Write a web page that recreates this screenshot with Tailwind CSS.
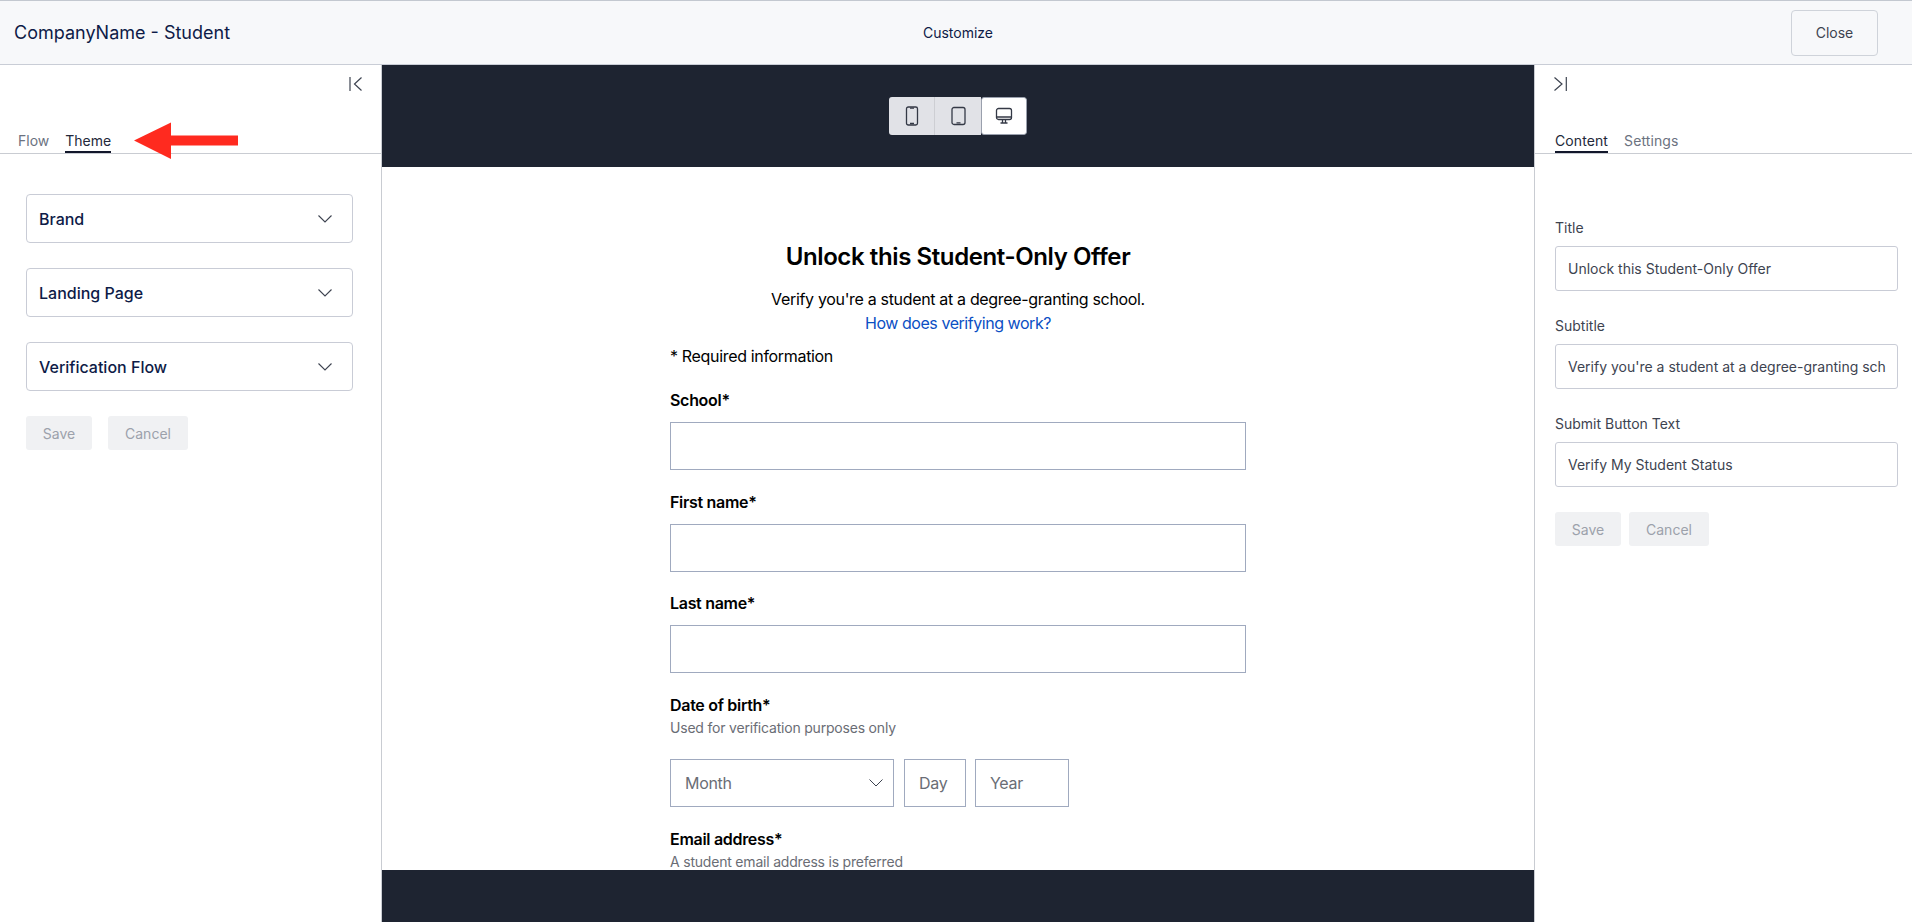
<!doctype html>
<html><head><meta charset="utf-8">
<script src="https://cdn.jsdelivr.net/npm/@tailwindcss/browser@4"></script>
</head>
<body class="m-0 overflow-hidden bg-white font-['Inter','Liberation_Sans',sans-serif]">
<div class="flex h-[922px] w-[1912px] flex-col overflow-hidden">
  <header class="grid h-[65px] shrink-0 grid-cols-[1fr_auto_1fr] items-center border-y border-t-[#c3c8d0] border-b-[#c9cdd6] bg-[#f7f8fa] px-[14px]">
    <div class="text-[18px] leading-6 text-[#0e1b47]">CompanyName - Student</div>
    <div class="pl-[4px] text-[14px] text-[#0e1b47]">Customize</div>
    <button class="mr-[20px] h-[46px] w-[87px] justify-self-end rounded-[4px] border border-[#cfd3da] text-[14px] text-[#3d4350]">Close</button>
  </header>
  <div class="flex min-h-0 flex-1">
    <aside class="w-[382px] shrink-0 border-r border-[#c9ccd2]">
      <div class="flex h-[66px] justify-end pr-[18px] pt-[11px]">
        <svg class="h-[16px] w-[16px]" viewBox="0 0 16 16" fill="none" stroke="#3d4350" stroke-width="1.2"><path d="M3 1v14"/><path d="M14.500 1.500 7.500 8l7 6.500"/></svg>
      </div>
      <div class="flex gap-4 border-b border-[#c9ccd2] pl-[18px] text-[14px]">
        <span class="pb-[2px] leading-[20px] text-[#6b7280]">Flow</span>
        <span class="border-b-2 border-[#12172b] leading-[20px] text-[#23283a]">Theme</span>
      </div>
      <div class="pl-[26px] pr-[28px] pt-[40px]">
        <div class="flex flex-col gap-[25px]">
          <div class="flex h-[49px] items-center justify-between rounded-[4px] border border-[#c9ccd6] pl-[12px] pr-[19px] text-[16px] font-medium text-[#0e1b47]">Brand<svg class="h-[16px] w-[16px]" viewBox="0 0 16 16" fill="none" stroke="#3d4350" stroke-width="1.1"><path d="M1.500 4.500 8 11l6.500-6.500"/></svg></div>
          <div class="flex h-[49px] items-center justify-between rounded-[4px] border border-[#c9ccd6] pl-[12px] pr-[19px] text-[16px] font-medium text-[#0e1b47]">Landing Page<svg class="h-[16px] w-[16px]" viewBox="0 0 16 16" fill="none" stroke="#3d4350" stroke-width="1.1"><path d="M1.500 4.500 8 11l6.500-6.500"/></svg></div>
          <div class="flex h-[49px] items-center justify-between rounded-[4px] border border-[#c9ccd6] pl-[12px] pr-[19px] text-[16px] font-medium text-[#0e1b47]">Verification Flow<svg class="h-[16px] w-[16px]" viewBox="0 0 16 16" fill="none" stroke="#3d4350" stroke-width="1.1"><path d="M1.500 4.500 8 11l6.500-6.500"/></svg></div>
        </div>
        <div class="mt-[25px] flex gap-4 text-[14px] text-[#9ca1ab]">
          <button class="h-[34px] w-[66px] rounded-[3px] bg-[#f0f1f3]">Save</button>
          <button class="h-[34px] w-[80px] rounded-[3px] bg-[#f0f1f3]">Cancel</button>
        </div>
      </div>
    </aside>

    <main class="flex min-w-0 flex-1 flex-col bg-[#1e2431]">
      <div class="flex h-[102px] shrink-0 items-center justify-center">
        <div class="flex h-[38px] overflow-hidden rounded-[3px]">
          <div class="flex w-[46px] items-center justify-center border-r border-[#cdced3] bg-[#e1e2e7]">
            <svg class="h-[20px] w-[14px]" viewBox="0 0 14 20" fill="none" stroke="#343946" stroke-width="1.300"><rect x="1.500" y="1" width="11" height="18" rx="1.800"/><path d="M5 2.200h4M5 17.500h4"/></svg>
          </div>
          <div class="flex w-[46px] items-center justify-center bg-[#e1e2e7]">
            <svg class="h-[20px] w-[15px]" viewBox="0 0 15 20" fill="none" stroke="#343946" stroke-width="1.300"><rect x="1" y="1.500" width="13" height="17" rx="2"/><path d="M5.500 16.800h4"/></svg>
          </div>
          <div class="flex w-[46px] items-center justify-center rounded-[3px] border border-[#9aa0ad] bg-white">
            <svg class="h-[18px] w-[18px]" viewBox="0 0 18 18" fill="none" stroke="#343946" stroke-width="1.300"><rect x="1.500" y="1.500" width="15" height="11" rx="2"/><path d="M1.500 10h15"/><path d="M7.500 12.500v3M10.500 12.500v3M5.500 16h7"/></svg>
          </div>
        </div>
      </div>
      <div class="h-[703px] shrink-0 overflow-hidden bg-white">
        <div class="mx-auto w-[576px] pt-[75px]">
          <h1 class="text-center text-[24px] font-semibold leading-[29px] tracking-[-0.4px] text-black">Unlock this Student-Only Offer</h1>
          <p class="mt-[16px] text-center text-[16px] leading-6 tracking-[-0.33px] text-black">Verify you're a student at a degree-granting school.<br><span class="tracking-[-0.45px] text-[#0b4fc4]">How does verifying work?</span></p>
          <p class="mt-[9px] text-[16px] leading-6 tracking-[-0.33px] text-black">* Required information</p>
          <label class="mt-[20px] block text-[16px] font-semibold leading-6 tracking-[-0.3px] text-black">School*</label>
          <div class="mt-[10px] h-[48px] border border-[#a0aabf]"></div>
          <label class="mt-[19.5px] block text-[16px] font-semibold leading-6 tracking-[-0.3px] text-black">First name*</label>
          <div class="mt-[10px] h-[48px] border border-[#a0aabf]"></div>
          <label class="mt-[19.5px] block text-[16px] font-semibold leading-6 tracking-[-0.3px] text-black">Last name*</label>
          <div class="mt-[10px] h-[48px] border border-[#a0aabf]"></div>
          <label class="mt-[19.5px] block text-[16px] font-semibold leading-6 tracking-[-0.3px] text-black">Date of birth*</label>
          <p class="mt-[1px] text-[14px] leading-[20px] tracking-[-0.2px] text-[#6a6d75]">Used for verification purposes only</p>
          <div class="mt-[21.5px] flex h-[48px] text-[16px] tracking-[-0.3px] text-[#6a6d75]">
            <div class="flex w-[224px] items-center justify-between border border-[#a0aabf] pl-[14px] pr-[9px]">Month<svg class="h-[16px] w-[16px]" viewBox="0 0 16 16" fill="none" stroke="#3d4350" stroke-width="1"><path d="M1.500 4.500 8 11l6.500-6.500"/></svg></div>
            <div class="ml-[10px] flex w-[62px] items-center border border-[#a0aabf] pl-[14px]">Day</div>
            <div class="ml-[9px] flex w-[94px] items-center border border-[#a0aabf] pl-[14px]">Year</div>
          </div>
          <label class="mt-[20px] block text-[16px] font-semibold leading-6 tracking-[-0.3px] text-black">Email address*</label>
          <p class="mt-[1px] text-[14px] leading-[20px] tracking-[-0.2px] text-[#6a6d75]">A student email address is preferred</p>
        </div>
      </div>
      <div class="flex-1"></div>
    </main>

    <aside class="w-[378px] shrink-0 border-l border-[#c9ccd2]">
      <div class="h-[66px] pl-[19px] pt-[11px]">
        <svg class="h-[16px] w-[16px]" viewBox="0 0 16 16" fill="none" stroke="#3d4350" stroke-width="1.2"><path d="M.5 1.500 8 8l-7.500 6.500"/><path d="M12.300 1v14"/></svg>
      </div>
      <div class="flex gap-4 border-b border-[#c9ccd2] pl-[20px] text-[14px]">
        <span class="border-b-2 border-[#12172b] leading-[20px] tracking-[0.1px] text-[#23283a]">Content</span>
        <span class="pb-[2px] leading-[20px] tracking-[0.1px] text-[#6b7280]">Settings</span>
      </div>
      <div class="pl-[20px] pr-[14px] pt-[64px] text-[14px]">
        <label class="block leading-[20px] text-[#3d4350]">Title</label>
        <div class="mt-[8px] flex h-[45px] items-center overflow-hidden whitespace-nowrap rounded-[3px] border border-[#c9ccd6] px-[12px] text-[#3d4350]">Unlock this Student-Only Offer</div>
        <label class="mt-[25px] block leading-[20px] text-[#3d4350]">Subtitle</label>
        <div class="mt-[8px] flex h-[45px] items-center overflow-hidden whitespace-nowrap rounded-[3px] border border-[#c9ccd6] px-[12px] text-[#3d4350]">Verify you're a student at a degree-granting sch</div>
        <label class="mt-[25px] block leading-[20px] text-[#3d4350]">Submit Button Text</label>
        <div class="mt-[8px] flex h-[45px] items-center overflow-hidden whitespace-nowrap rounded-[3px] border border-[#c9ccd6] px-[12px] text-[#3d4350]">Verify My Student Status</div>
        <div class="mt-[25px] flex gap-2 text-[#9ca1ab]">
          <button class="h-[34px] w-[66px] rounded-[3px] bg-[#f0f1f3]">Save</button>
          <button class="h-[34px] w-[80px] rounded-[3px] bg-[#f0f1f3]">Cancel</button>
        </div>
      </div>
    </aside>
  </div>
</div>
<svg class="absolute left-[133px] top-[121px] h-[40px] w-[106px]" viewBox="0 0 106 40"><path d="M1 19.500 38 1.500V14.500H105V24.500H38V38Z" fill="#ff2a1f"/></svg>
</body></html>
